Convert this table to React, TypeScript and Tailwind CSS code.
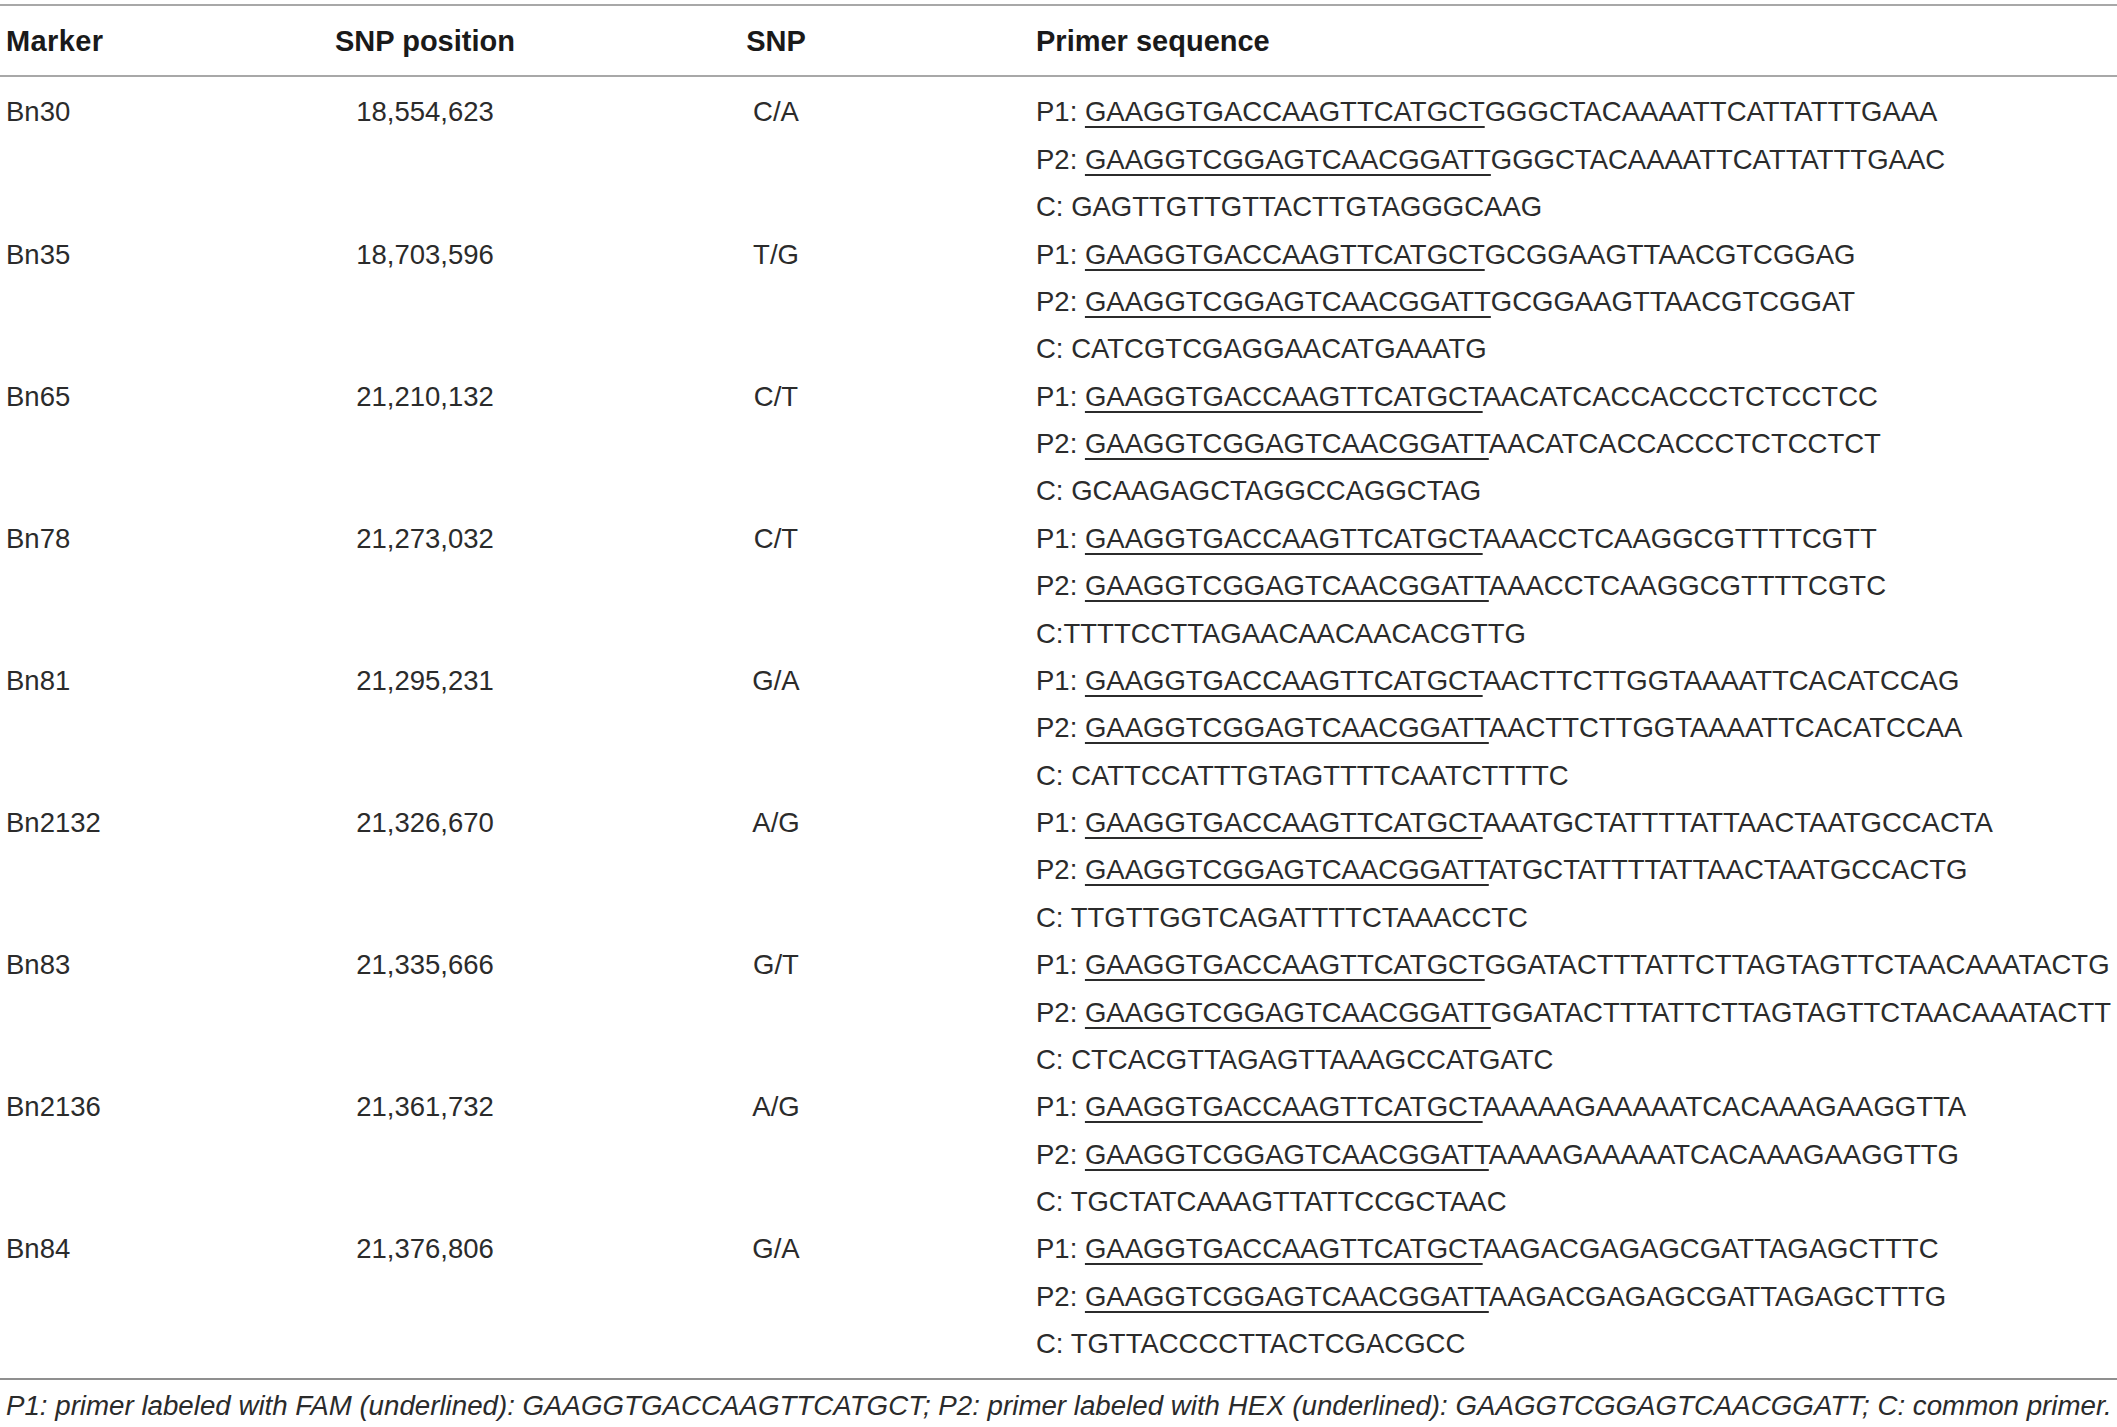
import React from "react";

const P1 = "GAAGGTGACCAAGTTCATGCT";
const P2 = "GAAGGTCGGAGTCAACGGATT";

type Row = {
  marker: string;
  pos: string;
  snp: string;
  p1: string;
  p2: string;
  c: string;
};

const rows: Row[] = [
  { marker: "Bn30", pos: "18,554,623", snp: "C/A", p1: "GGGCTACAAAATTCATTATTTGAAA", p2: "GGGCTACAAAATTCATTATTTGAAC", c: "C: GAGTTGTTGTTACTTGTAGGGCAAG" },
  { marker: "Bn35", pos: "18,703,596", snp: "T/G", p1: "GCGGAAGTTAACGTCGGAG", p2: "GCGGAAGTTAACGTCGGAT", c: "C: CATCGTCGAGGAACATGAAATG" },
  { marker: "Bn65", pos: "21,210,132", snp: "C/T", p1: "AACATCACCACCCTCTCCTCC", p2: "AACATCACCACCCTCTCCTCT", c: "C: GCAAGAGCTAGGCCAGGCTAG" },
  { marker: "Bn78", pos: "21,273,032", snp: "C/T", p1: "AAACCTCAAGGCGTTTTCGTT", p2: "AAACCTCAAGGCGTTTTCGTC", c: "C:TTTTCCTTAGAACAACAACACGTTG" },
  { marker: "Bn81", pos: "21,295,231", snp: "G/A", p1: "AACTTCTTGGTAAAATTCACATCCAG", p2: "AACTTCTTGGTAAAATTCACATCCAA", c: "C: CATTCCATTTGTAGTTTTCAATCTTTTC" },
  { marker: "Bn2132", pos: "21,326,670", snp: "A/G", p1: "AAATGCTATTTTATTAACTAATGCCACTA", p2: "ATGCTATTTTATTAACTAATGCCACTG", c: "C: TTGTTGGTCAGATTTTCTAAACCTC" },
  { marker: "Bn83", pos: "21,335,666", snp: "G/T", p1: "GGATACTTTATTCTTAGTAGTTCTAACAAATACTG", p2: "GGATACTTTATTCTTAGTAGTTCTAACAAATACTT", c: "C: CTCACGTTAGAGTTAAAGCCATGATC" },
  { marker: "Bn2136", pos: "21,361,732", snp: "A/G", p1: "AAAAAGAAAAATCACAAAGAAGGTTA", p2: "AAAAGAAAAATCACAAAGAAGGTTG", c: "C: TGCTATCAAAGTTATTCCGCTAAC" },
  { marker: "Bn84", pos: "21,376,806", snp: "G/A", p1: "AAGACGAGAGCGATTAGAGCTTTC", p2: "AAGACGAGAGCGATTAGAGCTTTG", c: "C: TGTTACCCCTTACTCGACGCC" },
];

const U = ({ children }: { children: React.ReactNode }) => (
  <span className="underline decoration-[1.5px] underline-offset-[5px]">{children}</span>
);

export default function App() {
  return (
    <div
      className="w-[2117px] min-h-[1427px] overflow-hidden bg-white text-[#2b2b2b] text-[27.5px] leading-[47.37px] whitespace-nowrap"
      style={{ fontFamily: '"Liberation Sans", Arial, sans-serif' }}
    >
      <div className="pt-[4px]">
        <div className="border-t-2 border-[#a8a8a8]" />
        <div className="grid grid-cols-[330px_190px_512px_1fr] pt-[12px] pb-[10px] font-bold text-[29px] text-[#1a1a1a]">
          <div className="pl-[6px] tracking-[0.4px]">Marker</div>
          <div className="text-center">SNP position</div>
          <div className="text-center">SNP</div>
          <div className="pl-[4px]">Primer sequence</div>
        </div>
        <div className="border-t-2 border-[#a8a8a8]" />
        <div className="pt-[11px] pb-[10px]">
          {rows.map((r) => (
            <div key={r.marker} className="grid grid-cols-[330px_190px_512px_1fr]">
              <div className="pl-[6px]">{r.marker}</div>
              <div className="text-center">{r.pos}</div>
              <div className="text-center">{r.snp}</div>
              <div className="pl-[4px] flex flex-col">
                <div>
                  P1: <U>{P1}</U>
                  {r.p1}
                </div>
                <div>
                  P2: <U>{P2}</U>
                  {r.p2}
                </div>
                <div>{r.c}</div>
              </div>
            </div>
          ))}
        </div>
        <div className="border-t-2 border-[#8f8f8f]" />
        <div className="pt-[2px] pl-[6px] italic text-[27.7px]">
          P1: primer labeled with FAM (underlined): GAAGGTGACCAAGTTCATGCT; P2: primer labeled with HEX
          (underlined): GAAGGTCGGAGTCAACGGATT; C: common primer.
        </div>
      </div>
    </div>
  );
}
